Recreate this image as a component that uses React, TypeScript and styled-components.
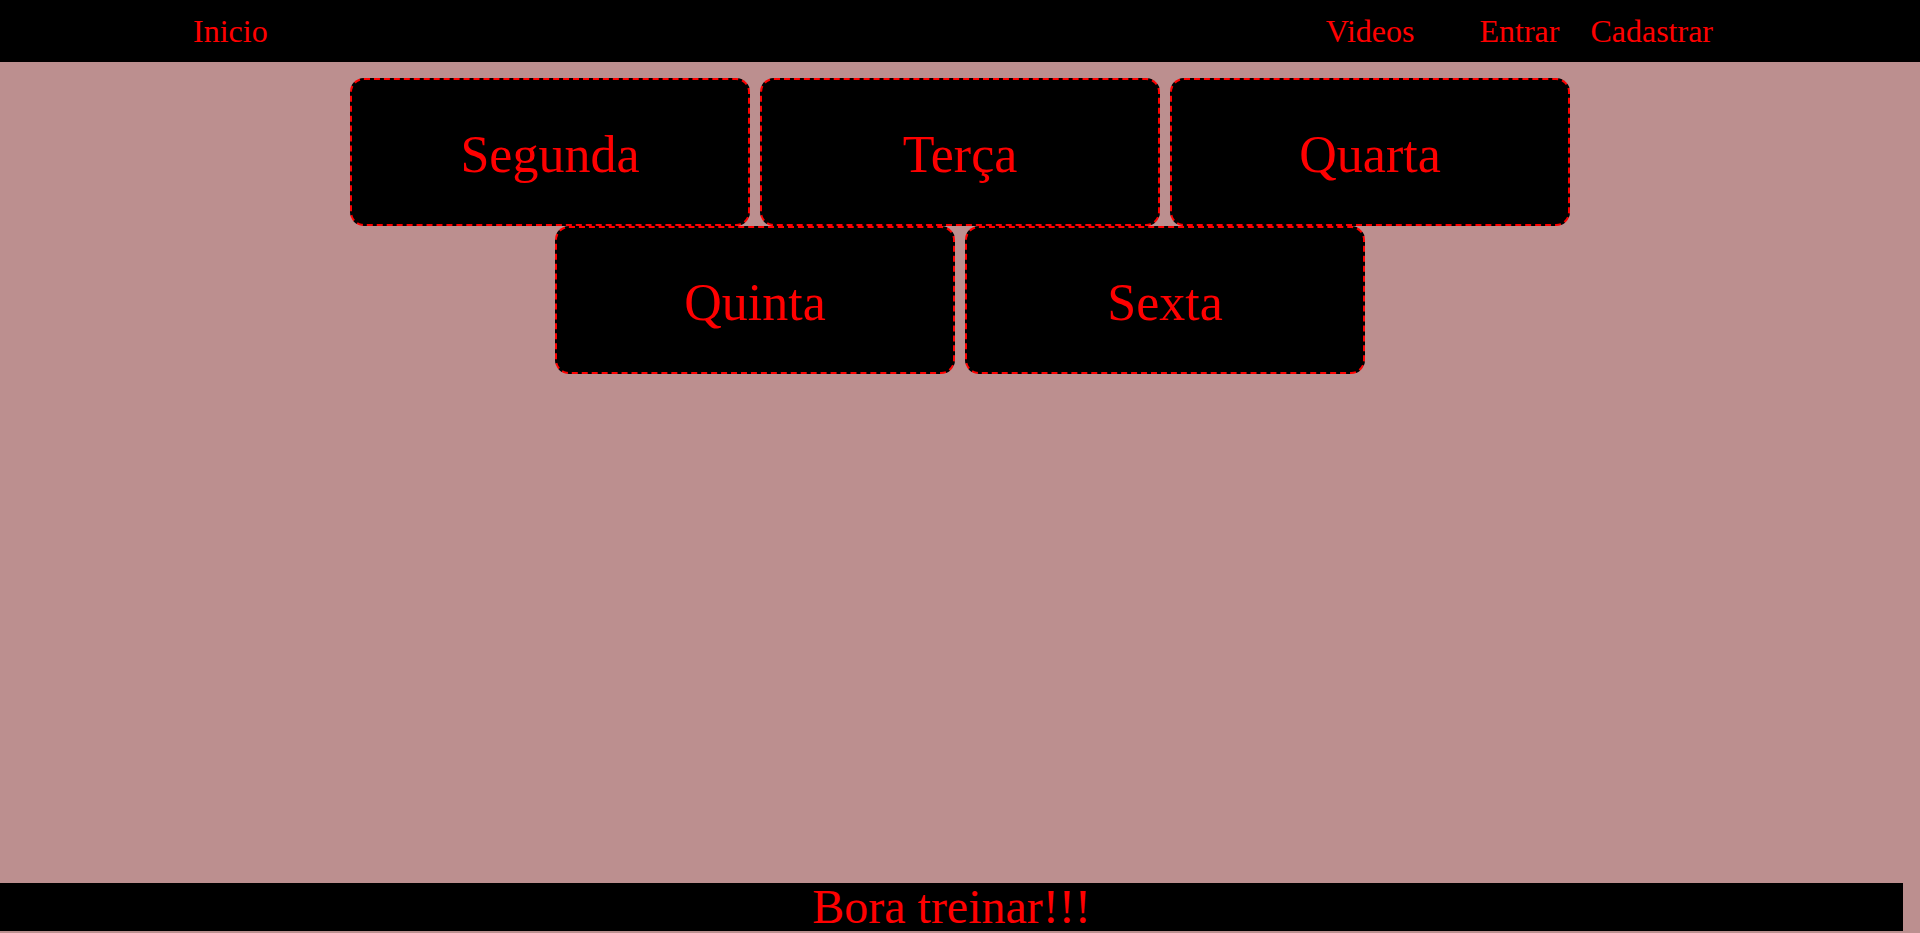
import React from "react";
import styled, { createGlobalStyle } from "styled-components";

const GlobalStyle = createGlobalStyle`
  html, body {
    margin: 0;
    padding: 0;
    background: #bc8f8f;
  }
  body {
    font-family: "Liberation Serif", "Times New Roman", serif;
    overflow: hidden;
  }
  * { box-sizing: border-box; }
`;

const Page = styled.div`
  min-height: 100vh;
  display: flex;
  flex-direction: column;
  background: #bc8f8f;
`;

const Header = styled.header`
  height: 62px;
  background: #000;
  display: flex;
  align-items: center;
  padding: 0 207px 0 193px;
`;

const NavLink = styled.a<{ $gap?: number }>`
  color: #ff0000;
  font-family: "Liberation Serif", "Times New Roman", serif;
  font-size: 32px;
  text-decoration: none;
  margin-right: ${(p) => p.$gap ?? 0}px;
  cursor: pointer;
`;

const Spacer = styled.div`
  flex: 1;
`;

const Main = styled.main`
  flex: 1;
  padding-top: 16px;
`;

const DayGrid = styled.div`
  max-width: 1230px;
  margin: 0 auto;
  display: flex;
  flex-wrap: wrap;
  justify-content: center;
`;

const DayCard = styled.a`
  width: 400px;
  height: 148px;
  margin: 0 5px;
  background: #000;
  border: 2px dashed #ff0000;
  border-radius: 14px;
  display: flex;
  align-items: center;
  justify-content: center;
  padding-top: 5px;
  color: #ff0000;
  font-family: "Liberation Serif", "Times New Roman", serif;
  font-size: 52px;
  text-decoration: none;
  cursor: pointer;
`;

const Footer = styled.footer`
  width: calc(100% - 17px);
  height: 48px;
  margin-bottom: 2px;
  background: #000;
  color: #ff0000;
  font-family: "Liberation Serif", "Times New Roman", serif;
  font-size: 48px;
  line-height: 48px;
  text-align: center;
  white-space: nowrap;
`;

const days = ["Segunda", "Terça", "Quarta", "Quinta", "Sexta"];

export default function App() {
  return (
    <>
      <GlobalStyle />
      <Page>
        <Header>
          <NavLink>Inicio</NavLink>
          <Spacer />
          <NavLink $gap={65}>Videos</NavLink>
          <NavLink $gap={31}>Entrar</NavLink>
          <NavLink>Cadastrar</NavLink>
        </Header>
        <Main>
          <DayGrid>
            {days.map((d) => (
              <DayCard key={d}>{d}</DayCard>
            ))}
          </DayGrid>
        </Main>
        <Footer>Bora treinar!!!</Footer>
      </Page>
    </>
  );
}
